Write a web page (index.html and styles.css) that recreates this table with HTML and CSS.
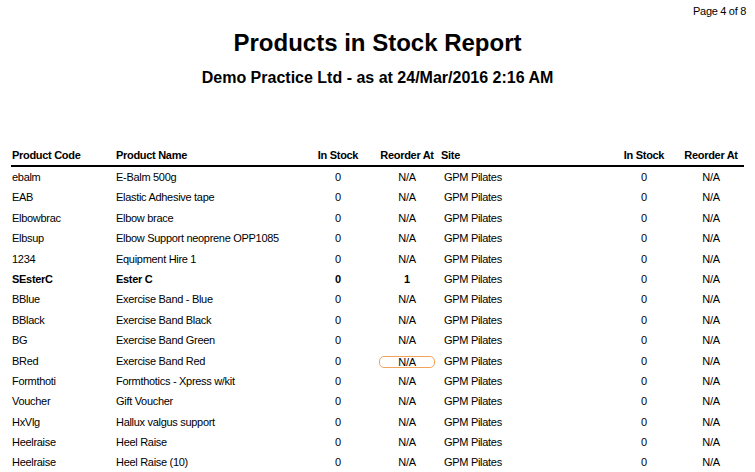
FILE: index.html
```html
<!DOCTYPE html>
<html>
<head>
<meta charset="utf-8">
<link rel="stylesheet" href="styles.css">
</head>
<body>
<div class="page">
  <div class="pageno">Page 4 of 8</div>
  <h1 class="title">Products in Stock Report</h1>
  <h2 class="subtitle">Demo Practice Ltd - as at 24/Mar/2016 2:16 AM</h2>
  <div class="table">
    <div class="row head">
      <div class="c-code">Product Code</div>
      <div class="c-name">Product Name</div>
      <div class="c-stock">In Stock</div>
      <div class="c-reorder">Reorder At</div>
      <div class="c-site">Site</div>
      <div class="c-stock2">In Stock</div>
      <div class="c-reorder2">Reorder At</div>
    </div>
    <div class="row"><div class="c-code">ebalm</div><div class="c-name">E-Balm 500g</div><div class="c-stock">0</div><div class="c-reorder">N/A</div><div class="c-site">GPM Pilates</div><div class="c-stock2">0</div><div class="c-reorder2">N/A</div></div>
    <div class="row"><div class="c-code">EAB</div><div class="c-name">Elastic Adhesive tape</div><div class="c-stock">0</div><div class="c-reorder">N/A</div><div class="c-site">GPM Pilates</div><div class="c-stock2">0</div><div class="c-reorder2">N/A</div></div>
    <div class="row"><div class="c-code">Elbowbrac</div><div class="c-name">Elbow brace</div><div class="c-stock">0</div><div class="c-reorder">N/A</div><div class="c-site">GPM Pilates</div><div class="c-stock2">0</div><div class="c-reorder2">N/A</div></div>
    <div class="row"><div class="c-code">Elbsup</div><div class="c-name">Elbow Support neoprene OPP1085</div><div class="c-stock">0</div><div class="c-reorder">N/A</div><div class="c-site">GPM Pilates</div><div class="c-stock2">0</div><div class="c-reorder2">N/A</div></div>
    <div class="row"><div class="c-code">1234</div><div class="c-name">Equipment Hire 1</div><div class="c-stock">0</div><div class="c-reorder">N/A</div><div class="c-site">GPM Pilates</div><div class="c-stock2">0</div><div class="c-reorder2">N/A</div></div>
    <div class="row strong"><div class="c-code b">SEsterC</div><div class="c-name b">Ester C</div><div class="c-stock b">0</div><div class="c-reorder b">1</div><div class="c-site">GPM Pilates</div><div class="c-stock2">0</div><div class="c-reorder2">N/A</div></div>
    <div class="row"><div class="c-code">BBlue</div><div class="c-name">Exercise Band - Blue</div><div class="c-stock">0</div><div class="c-reorder">N/A</div><div class="c-site">GPM Pilates</div><div class="c-stock2">0</div><div class="c-reorder2">N/A</div></div>
    <div class="row"><div class="c-code">BBlack</div><div class="c-name">Exercise Band Black</div><div class="c-stock">0</div><div class="c-reorder">N/A</div><div class="c-site">GPM Pilates</div><div class="c-stock2">0</div><div class="c-reorder2">N/A</div></div>
    <div class="row"><div class="c-code">BG</div><div class="c-name">Exercise Band Green</div><div class="c-stock">0</div><div class="c-reorder">N/A</div><div class="c-site">GPM Pilates</div><div class="c-stock2">0</div><div class="c-reorder2">N/A</div></div>
    <div class="row"><div class="c-code">BRed</div><div class="c-name">Exercise Band Red</div><div class="c-stock">0</div><div class="c-reorder"><span class="focus">N/A</span></div><div class="c-site">GPM Pilates</div><div class="c-stock2">0</div><div class="c-reorder2">N/A</div></div>
    <div class="row"><div class="c-code">Formthoti</div><div class="c-name">Formthotics - Xpress w/kit</div><div class="c-stock">0</div><div class="c-reorder">N/A</div><div class="c-site">GPM Pilates</div><div class="c-stock2">0</div><div class="c-reorder2">N/A</div></div>
    <div class="row"><div class="c-code">Voucher</div><div class="c-name">Gift Voucher</div><div class="c-stock">0</div><div class="c-reorder">N/A</div><div class="c-site">GPM Pilates</div><div class="c-stock2">0</div><div class="c-reorder2">N/A</div></div>
    <div class="row"><div class="c-code">HxVlg</div><div class="c-name">Hallux valgus support</div><div class="c-stock">0</div><div class="c-reorder">N/A</div><div class="c-site">GPM Pilates</div><div class="c-stock2">0</div><div class="c-reorder2">N/A</div></div>
    <div class="row"><div class="c-code">Heelraise</div><div class="c-name">Heel Raise</div><div class="c-stock">0</div><div class="c-reorder">N/A</div><div class="c-site">GPM Pilates</div><div class="c-stock2">0</div><div class="c-reorder2">N/A</div></div>
    <div class="row"><div class="c-code">Heelraise</div><div class="c-name">Heel Raise (10)</div><div class="c-stock">0</div><div class="c-reorder">N/A</div><div class="c-site">GPM Pilates</div><div class="c-stock2">0</div><div class="c-reorder2">N/A</div></div>
  </div>
</div>
</body>
</html>
```
FILE: styles.css
```css
html, body {
  margin: 0;
  padding: 0;
  background: #ffffff;
}
body {
  font-family: "Liberation Sans", Arial, sans-serif;
  color: #000000;
  overflow: hidden;
}
.page {
  width: 755px;
  height: 472px;
  overflow: hidden;
}
.pageno {
  padding-top: 5px;
  padding-right: 9px;
  text-align: right;
  font-size: 11px;
  line-height: 13px;
  letter-spacing: -0.3px;
}
.title {
  margin: 11px 0 0 0;
  text-align: center;
  font-size: 24px;
  line-height: 28px;
  font-weight: bold;
}
.subtitle {
  margin: 11px 0 0 0;
  text-align: center;
  font-size: 16px;
  line-height: 20px;
  font-weight: bold;
}
.table {
  margin: 57px 0 0 11px;
  width: 733px;
  font-size: 11px;
  letter-spacing: -0.3px;
}
.row {
  display: grid;
  grid-template-columns: 104px 195px 56px 74px 176px 56px 72px;
  align-items: start;
  box-sizing: border-box;
  height: 20.4px;
  padding-top: 4px;
  line-height: 13px;
  white-space: nowrap;
}
.row.head {
  height: 22px;
  padding-top: 4px;
  border-bottom: 2px solid #000000;
  font-weight: bold;
}
.b {
  font-weight: bold;
}
.c-code, .c-name {
  padding-left: 1px;
}
.c-site {
  padding-left: 4px;
}
.head .c-site {
  padding-left: 1px;
}
.c-stock, .c-stock2 {
  text-align: center;
}
.c-reorder {
  text-align: center;
  padding-left: 8px;
}
.c-reorder2 {
  text-align: center;
  padding-left: 6px;
}
.focus {
  display: inline-block;
  box-sizing: border-box;
  width: 56px;
  height: 12px;
  margin-top: 1px;
  line-height: 10px;
  border: 1px solid #f0a45c;
  border-radius: 5px;
}
```
